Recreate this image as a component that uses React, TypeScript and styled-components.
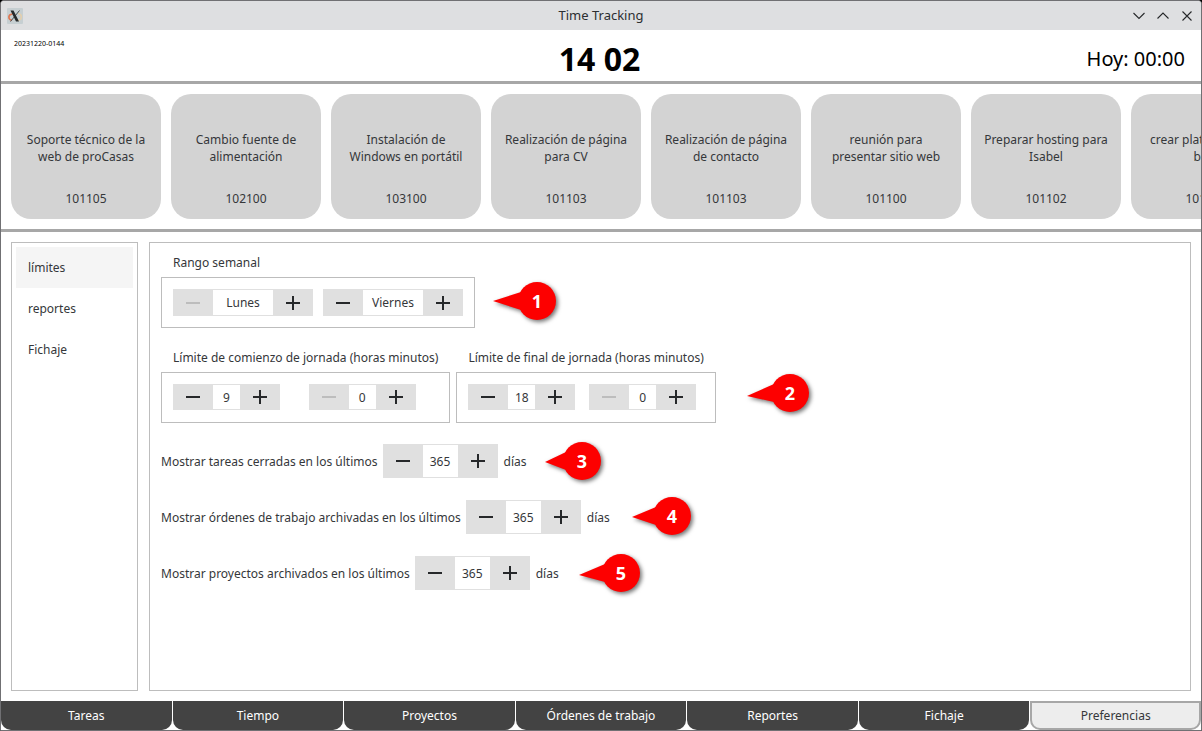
import React, { useState } from "react";
import styled, { createGlobalStyle } from "styled-components";

const GlobalStyle = createGlobalStyle`
  *, *::before, *::after { box-sizing: border-box; }
  body {
    margin: 0;
    background: #000;
    color: #35373a;
    font: 12px/18px "Noto Sans", "Open Sans", sans-serif;
  }
  button, input { font: inherit; color: inherit; margin: 0; padding: 0; border: 0; border-radius: 0; }
  button:enabled { cursor: pointer; }
`;

const Window = styled.div`
  display: flex;
  flex-direction: column;
  min-height: 100vh;
  overflow: hidden;
  border: 1px solid #707073;
  border-radius: 4px 4px 0 0;
  background: #fff;
`;

const TitleBar = styled.header`
  display: grid;
  grid-template-columns: 1fr auto 1fr;
  align-items: center;
  height: 29px;
  padding: 0 2px;
  background: #dedfe1;
`;

const AppMark = styled.svg`
  margin-left: 4px;
`;

const WindowTitle = styled.span`
  padding-bottom: 2px;
  color: #2c2e31;
  font-size: 13px;
`;

const WindowButtons = styled.div`
  display: flex;
  justify-content: flex-end;
`;

const WindowButton = styled.button`
  display: grid;
  place-items: center;
  width: 24px;
  height: 24px;
  background: none;
`;

const StatusBar = styled.div`
  display: grid;
  grid-template-columns: 1fr auto 1fr;
  align-items: center;
  height: 54px;
  padding: 0 16px 0 13px;
  border-bottom: 3px solid #a7a7a7;
  color: #000;
`;

const Version = styled.span`
  align-self: start;
  padding-top: 9px;
  font-size: 7px;
  line-height: 10px;
`;

const Clock = styled.time`
  padding-top: 6px;
  font-size: 32px;
  line-height: 44px;
  font-weight: 700;
`;

const Today = styled.span`
  justify-self: end;
  padding-top: 6px;
  font-size: 20px;
  line-height: 28px;
`;

const TaskStrip = styled.div`
  display: flex;
  gap: 10px;
  padding: 10px;
  overflow: hidden;
  border-bottom: 3px solid #a7a7a7;
`;

const TaskCard = styled.button`
  display: flex;
  flex: none;
  flex-direction: column;
  justify-content: space-between;
  align-items: center;
  width: 150px;
  height: 125px;
  padding: 37px 10px 12px;
  border-radius: 20px;
  background: #d3d3d3;
  line-height: 17px;
  text-align: center;
  white-space: pre-line;
`;

const Workspace = styled.main`
  display: flex;
  flex: 1;
  gap: 11px;
  padding: 10px;
`;

const Sidebar = styled.nav`
  width: 127px;
  padding: 4px;
  border: 1px solid #bdbdbd;
`;

const SideItem = styled.button<{ $active: boolean }>`
  display: block;
  width: 100%;
  height: 41px;
  padding: 0 12px;
  background: ${(p) => (p.$active ? "#f5f5f5" : "transparent")};
  text-align: left;
`;

const Panel = styled.section`
  position: relative;
  display: flex;
  flex: 1;
  flex-direction: column;
  gap: 21px;
  min-width: 0;
  padding: 11px;
  border: 1px solid #bdbdbd;
`;

const GroupRow = styled.div`
  display: flex;
  gap: 6px;
`;

const Group = styled.div`
  display: flex;
  flex-direction: column;
  gap: 5px;
`;

const GroupTitle = styled.span`
  padding: 0 12px;
`;

const GroupBox = styled.div<{ $gap: number }>`
  display: grid;
  grid-template-columns: 1fr 1fr;
  align-items: start;
  gap: ${(p) => p.$gap}px;
  min-height: 51px;
  padding: 11px;
  border: 1px solid #bdbdbd;
`;

const DayRows = styled.div`
  display: flex;
  flex-direction: column;
  gap: 22px;
`;

const DayRow = styled.div`
  display: flex;
  align-items: center;
  gap: 5px;
`;

const DayLabel = styled.label`
  padding-top: 2px;
`;

const DayUnit = styled.span`
  padding: 2px 0 0 1px;
`;

const StepperFrame = styled.div<{ $height: number }>`
  display: flex;
  justify-self: start;
  height: ${(p) => p.$height}px;
`;

const StepButton = styled.button`
  display: grid;
  place-items: center;
  width: 40px;
  background: #e0e0e0;
  color: #26282a;
  &:disabled { color: #bdbdbd; }
`;

const StepValue = styled.input<{ $width: number }>`
  width: ${(p) => p.$width}px;
  padding-top: 1px;
  border-top: 1px solid #e0e0e0;
  border-bottom: 1px solid #e0e0e0;
  background: #fff;
  text-align: center;
  outline: none;
`;

const Pin = styled.div<{ $x: number; $y: number }>`
  position: absolute;
  left: ${(p) => p.$x - 19}px;
  top: ${(p) => p.$y - 19}px;
  display: grid;
  place-items: center;
  width: 38px;
  height: 38px;
  color: #fff;
  font-size: 18px;
  line-height: 24px;
  font-weight: 700;
`;

const PinShape = styled.svg`
  position: absolute;
  inset: 0;
  overflow: visible;
  filter: drop-shadow(2px 2px 2px rgba(0, 0, 0, 0.55));
`;

const PinNumber = styled.span`
  position: relative;
`;

const TabBar = styled.nav`
  display: grid;
  grid-template-columns: repeat(7, minmax(0, 1fr));
  gap: 1px;
`;

const Tab = styled.button<{ $active: boolean }>`
  height: 29px;
  border: ${(p) => (p.$active ? "2px solid #a7a7a7" : "0")};
  border-radius: 0 0 10px 10px;
  background: ${(p) => (p.$active ? "#ededed" : "#434343")};
  color: ${(p) => (p.$active ? "#35373a" : "#fff")};
`;

const AppIcon = () => (
  <AppMark width="16" height="16" viewBox="0 0 16 16" aria-hidden="true">
    <rect width="16" height="16" rx="1" fill="#c6cfd2" />
    <path d="M5.500 6C1 6.500 .5 11 5 12.500" fill="none" stroke="#e0754f" strokeWidth="1.600" />
    <path d="M11 5.500c4 .5 5 5.500 0 7" fill="none" stroke="#e3cfae" strokeWidth="1.600" />
    <path d="M12.500 2.500 3.500 13.500" stroke="#4b5154" strokeWidth="1" />
    <path d="M3.500 2.500h3l5.500 11H9z" fill="#25292b" />
  </AppMark>
);

const glyphs = { down: "M.5 3 6 8.500 11.500 3", up: "M.5 8.500 6 3l5.500 5.500", close: "M1.500 1.500l9 9m0-9-9 9" };

const WindowGlyph = ({ kind }: { kind: keyof typeof glyphs }) => (
  <svg width="12" height="12" viewBox="0 0 12 12" fill="none" stroke="#26282a" strokeWidth="1.100" aria-hidden="true">
    <path d={glyphs[kind]} />
  </svg>
);

const StepGlyph = ({ plus = false }: { plus?: boolean }) => (
  <svg width="14" height="14" viewBox="0 0 14 14" fill="currentColor" shapeRendering="crispEdges" aria-hidden="true">
    <rect y="6" width="14" height="2" />
    {plus && <rect x="6" width="2" height="14" />}
  </svg>
);

type StepperProps = {
  id?: string;
  label: string;
  initial: number;
  min?: number;
  max: number;
  names?: string[];
  width: number;
  height: number;
};

function Stepper({ id, label, initial, min = 0, max, names, width, height }: StepperProps) {
  const [value, setValue] = useState(initial);
  return (
    <StepperFrame $height={height}>
      <StepButton aria-label={`Reducir ${label}`} disabled={value <= min} onClick={() => setValue(value - 1)}>
        <StepGlyph />
      </StepButton>
      <StepValue id={id} aria-label={id ? undefined : label} readOnly $width={width} value={names ? names[value] : value} />
      <StepButton aria-label={`Aumentar ${label}`} disabled={value >= max} onClick={() => setValue(value + 1)}>
        <StepGlyph plus />
      </StepButton>
    </StepperFrame>
  );
}

const days = ["Lunes", "Martes", "Miércoles", "Jueves", "Viernes", "Sábado", "Domingo"];

const tasks = [
  ["Soporte técnico de la web de proCasas", "101105"],
  ["Cambio fuente de alimentación", "102100"],
  ["Instalación de Windows en portátil", "103100"],
  ["Realización de página para CV", "101103"],
  ["Realización de página de contacto", "101103"],
  ["reunión para presentar sitio web", "101100"],
  ["Preparar hosting para Isabel", "101102"],
  ["crear plataforma de\nbeta", "101102"],
];

const sections = ["límites", "reportes", "Fichaje"];
const tabs = ["Tareas", "Tiempo", "Proyectos", "Órdenes de trabajo", "Reportes", "Fichaje", "Preferencias"];

const limits = [
  { title: "Límite de comienzo de jornada (horas minutos)", hour: 9 },
  { title: "Límite de final de jornada (horas minutos)", hour: 18 },
];

const ranges = [
  { id: "tareas", text: "Mostrar tareas cerradas en los últimos" },
  { id: "ordenes", text: "Mostrar órdenes de trabajo archivadas en los últimos" },
  { id: "proyectos", text: "Mostrar proyectos archivados en los últimos" },
];

/* Circle centre in the panel, and the pointer's tip relative to that centre. */
const pins = [
  { x: 387, y: 58, tipX: -44, tipY: 0 },
  { x: 640, y: 150, tipX: -43, tipY: 3 },
  { x: 432, y: 218, tipX: -37, tipY: 1 },
  { x: 522, y: 273, tipX: -40, tipY: 1 },
  { x: 471, y: 330, tipX: -42, tipY: 2 },
];

export default function App() {
  const [section, setSection] = useState("límites");
  const [tab, setTab] = useState("Preferencias");
  return (
    <>
      <GlobalStyle />
      <Window>
        <TitleBar>
          <AppIcon />
          <WindowTitle>Time Tracking</WindowTitle>
          <WindowButtons>
            <WindowButton aria-label="Minimizar"><WindowGlyph kind="down" /></WindowButton>
            <WindowButton aria-label="Maximizar"><WindowGlyph kind="up" /></WindowButton>
            <WindowButton aria-label="Cerrar"><WindowGlyph kind="close" /></WindowButton>
          </WindowButtons>
        </TitleBar>
        <StatusBar>
          <Version>20231220-0144</Version>
          <Clock>14 02</Clock>
          <Today>Hoy: 00:00</Today>
        </StatusBar>
        <TaskStrip>
          {tasks.map(([name, code]) => (
            <TaskCard key={name}>
              <span>{name}</span>
              <span>{code}</span>
            </TaskCard>
          ))}
        </TaskStrip>
        <Workspace>
          <Sidebar>
            {sections.map((name) => (
              <SideItem key={name} $active={name === section} onClick={() => setSection(name)}>{name}</SideItem>
            ))}
          </Sidebar>
          <Panel>
            <GroupRow>
              <Group role="group" aria-labelledby="rango">
                <GroupTitle id="rango">Rango semanal</GroupTitle>
                <GroupBox $gap={10}>
                  <Stepper label="primer día" initial={0} max={6} names={days} width={60} height={27} />
                  <Stepper label="último día" initial={4} max={6} names={days} width={60} height={27} />
                </GroupBox>
              </Group>
            </GroupRow>
            <GroupRow>
              {limits.map(({ title, hour }) => (
                <Group key={title} role="group" aria-label={title}>
                  <GroupTitle>{title}</GroupTitle>
                  <GroupBox $gap={6}>
                    <Stepper label="horas" initial={hour} max={23} width={27} height={26} />
                    <Stepper label="minutos" initial={0} max={59} width={27} height={26} />
                  </GroupBox>
                </Group>
              ))}
            </GroupRow>
            <DayRows>
              {ranges.map(({ id, text }) => (
                <DayRow key={id}>
                  <DayLabel htmlFor={id}>{text}</DayLabel>
                  <Stepper id={id} label={text} initial={365} max={9999} width={35} height={34} />
                  <DayUnit>días</DayUnit>
                </DayRow>
              ))}
            </DayRows>
            {pins.map(({ x, y, tipX, tipY }, i) => (
              <Pin key={i} $x={x} $y={y}>
                <PinShape viewBox="-19 -19 38 38" fill="#fd0000" aria-hidden="true">
                  <circle r="19" />
                  <path d={`M${tipX} ${tipY}L-16-9V9z`} />
                </PinShape>
                <PinNumber>{i + 1}</PinNumber>
              </Pin>
            ))}
          </Panel>
        </Workspace>
        <TabBar>
          {tabs.map((name) => (
            <Tab key={name} $active={name === tab} onClick={() => setTab(name)}>{name}</Tab>
          ))}
        </TabBar>
      </Window>
    </>
  );
}
